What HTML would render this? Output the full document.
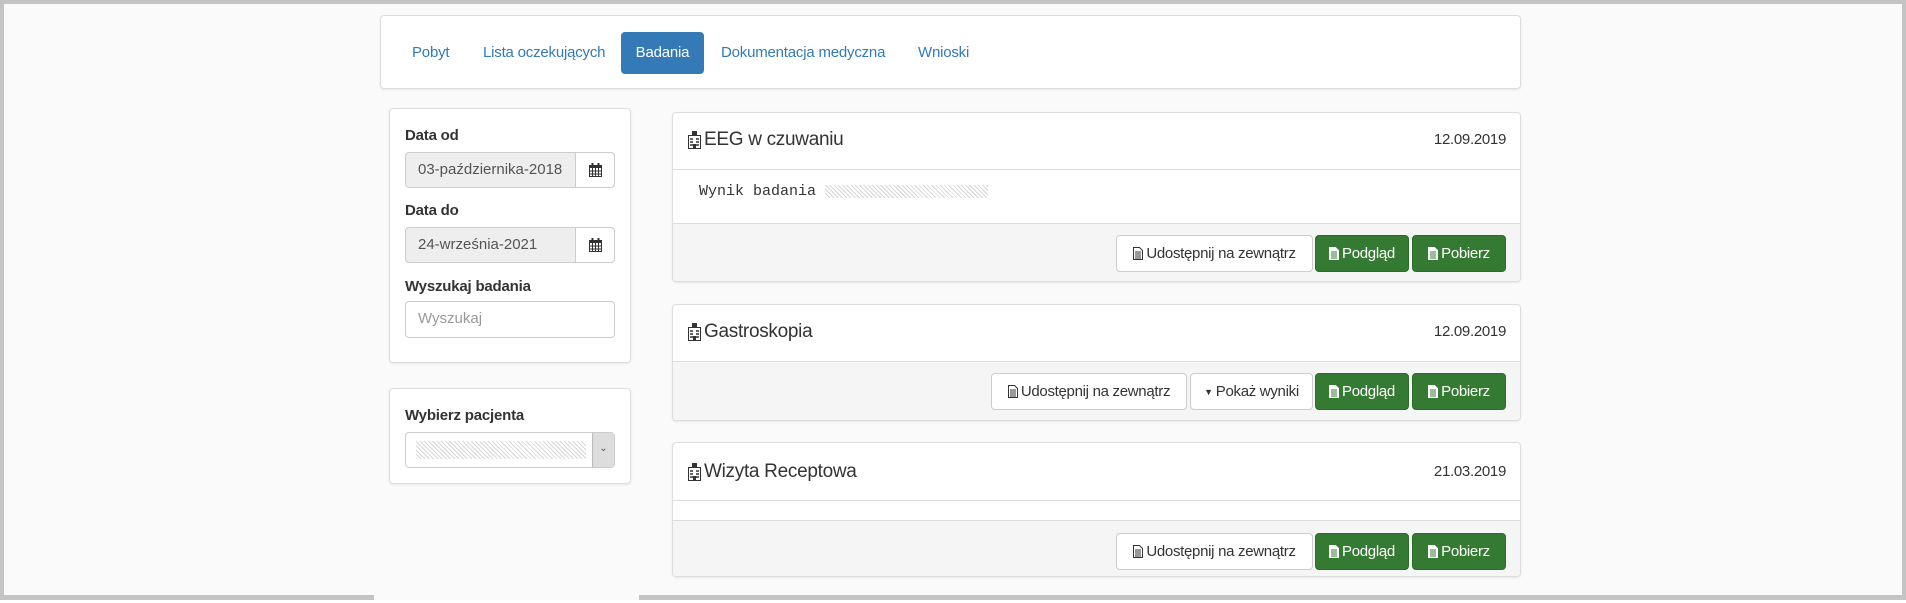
<!DOCTYPE html>
<html><head><meta charset="utf-8"><style>
*{box-sizing:border-box;margin:0;padding:0}
body{width:1906px;height:603px;background:#fafafa;font-family:"Liberation Sans",sans-serif;position:relative;overflow:hidden;color:#333}
.a{position:absolute}
.box{position:absolute;background:#fff;border:1px solid #ddd;border-radius:4px;box-shadow:0 1px 2px rgba(0,0,0,.08)}
.tab{position:absolute;top:32px;height:42px;line-height:42px;font-size:15px;color:#337ab7;letter-spacing:-.2px}
.lbl{position:absolute;left:405px;font-size:15px;font-weight:bold;color:#333;letter-spacing:-.2px}
.inp{position:absolute;left:405px;width:210px;height:36px;border:1px solid #ccc;border-radius:4px;background:#eee;font-size:15px;line-height:34px;padding-left:12px;color:#555}
.inp .ad{position:absolute;right:0;top:0;width:39px;height:34px;background:#fff;border-left:1px solid #ccc;border-radius:0 4px 4px 0;display:flex;align-items:center;justify-content:center}
.card{position:absolute;left:672px;width:849px;background:#fff;border:1px solid #ddd;border-radius:4px;box-shadow:0 1px 2px rgba(0,0,0,.08);overflow:hidden}
.hd{position:absolute;left:0;right:0;top:0;border-bottom:1px solid #ddd}
.tt{position:absolute;left:15px;font-size:19px;color:#333;display:flex;align-items:center;gap:3px;letter-spacing:-.3px}
.dt{position:absolute;right:14px;font-size:15px;color:#333;letter-spacing:-.3px}
.ft{position:absolute;left:0;right:0;bottom:0;background:#f5f5f5;border-top:1px solid #ddd}
.btn{position:absolute;height:37px;border-radius:4px;font-size:15px;display:flex;align-items:center;justify-content:center;gap:3px;letter-spacing:-.3px}
.w{background:#fff;border:1px solid #ccc;color:#333}
.g{background:#357a32;border:1px solid #2d6a2b;color:#fff}
.blur{display:inline-block;background:repeating-linear-gradient(45deg,#ccc 0 1px,#fff 1px 3px),repeating-linear-gradient(-45deg,#bbb 0 1px,transparent 1px 4px);opacity:.8}
</style></head><body>
<div class="a" style="left:0;top:0;width:1906px;height:4px;background:#c4c4c4"></div>
<div class="a" style="left:0;top:0;width:4px;height:600px;background:#c4c4c4"></div>
<div class="a" style="left:1902px;top:0;width:4px;height:600px;background:#c4c4c4"></div>
<div class="a" style="left:0;top:595px;width:374px;height:5px;background:#c4c4c4"></div>
<div class="a" style="left:639px;top:595px;width:1267px;height:5px;background:#c4c4c4"></div>
<div class="a" style="left:0;top:600px;width:1906px;height:3px;background:#fff"></div>

<div class="box" style="left:380px;top:15px;width:1141px;height:74px"></div>
<div class="tab" style="left:412px">Pobyt</div>
<div class="tab" style="left:483px">Lista oczekujących</div>
<div class="tab" style="left:621px;width:83px;background:#337ab7;color:#fff;border-radius:4px;text-align:center">Badania</div>
<div class="tab" style="left:721px">Dokumentacja medyczna</div>
<div class="tab" style="left:918px">Wnioski</div>

<div class="box" style="left:389px;top:108px;width:242px;height:255px"></div>
<div class="lbl" style="top:127px">Data od</div>
<div class="inp" style="top:152px">03-października-2018<div class="ad"><svg width="13" height="14" viewBox="0 0 13 14"><rect x="0.5" y="2.5" width="12" height="11" fill="#fff" stroke="#333"/><rect x="0" y="2" width="13" height="3" fill="#333"/><rect x="2.5" y="0" width="2" height="4" fill="#333"/><rect x="8.5" y="0" width="2" height="4" fill="#333"/><path d="M0 8h13M0 11h13M3.5 5v9M6.5 5v9M9.5 5v9" stroke="#333" stroke-width="1"/></svg></div></div>
<div class="lbl" style="top:202px">Data do</div>
<div class="inp" style="top:227px">24-września-2021<div class="ad"><svg width="13" height="14" viewBox="0 0 13 14"><rect x="0.5" y="2.5" width="12" height="11" fill="#fff" stroke="#333"/><rect x="0" y="2" width="13" height="3" fill="#333"/><rect x="2.5" y="0" width="2" height="4" fill="#333"/><rect x="8.5" y="0" width="2" height="4" fill="#333"/><path d="M0 8h13M0 11h13M3.5 5v9M6.5 5v9M9.5 5v9" stroke="#333" stroke-width="1"/></svg></div></div>
<div class="lbl" style="top:278px">Wyszukaj badania</div>
<div class="inp" style="top:301px;height:37px;background:#fff;color:#999">Wyszukaj</div>

<div class="box" style="left:389px;top:388px;width:242px;height:96px"></div>
<div class="lbl" style="top:407px">Wybierz pacjenta</div>
<div class="inp" style="top:432px;height:36px;background:#fff;padding:0"><span class="blur" style="position:absolute;left:10px;top:8px;width:170px;height:18px"></span><div style="position:absolute;right:0;top:0;width:22px;height:34px;background:#ddd;border-left:1px solid #bbb;font-size:10px;text-align:center;line-height:32px;color:#555">&#8964;</div></div>

<!-- card 1 -->
<div class="card" style="top:112px;height:170px">
 <div class="hd" style="height:57px"></div>
 <div class="tt" style="top:16px"><svg width="13" height="18" viewBox="0 0 13 18"><rect x="0.5" y="4.5" width="12" height="13" fill="#fff" stroke="#333"/><rect x="4" y="0" width="5" height="5" fill="#333"/><path d="M2 8h3M8 8h3M2 11h3M8 11h3M2 14h3M8 14h3" stroke="#333" stroke-width="1.5"/><rect x="5" y="13" width="3" height="5" fill="#333"/></svg>EEG w czuwaniu</div>
 <div class="dt" style="top:18px">12.09.2019</div>
 <div class="a" style="left:26px;top:70px;font-family:'Liberation Mono',monospace;font-size:15px;color:#333">Wynik badania <span class="blur" style="width:163px;height:13px;vertical-align:middle"></span></div>
 <div class="ft" style="height:58px"></div>
 <div class="btn w" style="left:443px;top:122px;width:197px"><svg width="10" height="13" viewBox="0 0 10 13"><path d="M.5.5h6l3 3v9h-9z" fill="#fff" stroke="#333"/><path d="M2 5h6M2 7h6M2 9h6M2 11h6" stroke="#333"/></svg>Udostępnij na zewnątrz</div>
 <div class="btn g" style="left:642px;top:122px;width:94px"><svg width="10" height="13" viewBox="0 0 10 13"><path d="M.5.5h6l3 3v9h-9z" fill="#fff" stroke="#fff"/><path d="M2 5h6M2 7h6M2 9h6M2 11h6" stroke="#357a32"/></svg>Podgląd</div>
 <div class="btn g" style="left:739px;top:122px;width:94px"><svg width="10" height="13" viewBox="0 0 10 13"><path d="M.5.5h6l3 3v9h-9z" fill="#fff" stroke="#fff"/><path d="M2 5h6M2 7h6M2 9h6M2 11h6" stroke="#357a32"/></svg>Pobierz</div>
</div>

<!-- card 2 -->
<div class="card" style="top:304px;height:117px">
 <div class="hd" style="height:58px;border-bottom:2px solid #ddd"></div>
 <div class="tt" style="top:16px"><svg width="13" height="18" viewBox="0 0 13 18"><rect x="0.5" y="4.5" width="12" height="13" fill="#fff" stroke="#333"/><rect x="4" y="0" width="5" height="5" fill="#333"/><path d="M2 8h3M8 8h3M2 11h3M8 11h3M2 14h3M8 14h3" stroke="#333" stroke-width="1.5"/><rect x="5" y="13" width="3" height="5" fill="#333"/></svg>Gastroskopia</div>
 <div class="dt" style="top:18px">12.09.2019</div>
 <div class="ft" style="height:58px;border-top:none"></div>
 <div class="btn w" style="left:318px;top:68px;width:196px"><svg width="10" height="13" viewBox="0 0 10 13"><path d="M.5.5h6l3 3v9h-9z" fill="#fff" stroke="#333"/><path d="M2 5h6M2 7h6M2 9h6M2 11h6" stroke="#333"/></svg>Udostępnij na zewnątrz</div>
 <div class="btn w" style="left:517px;top:68px;width:123px"><span style="font-size:9px">&#9660;</span>Pokaż wyniki</div>
 <div class="btn g" style="left:642px;top:68px;width:94px"><svg width="10" height="13" viewBox="0 0 10 13"><path d="M.5.5h6l3 3v9h-9z" fill="#fff" stroke="#fff"/><path d="M2 5h6M2 7h6M2 9h6M2 11h6" stroke="#357a32"/></svg>Podgląd</div>
 <div class="btn g" style="left:739px;top:68px;width:94px"><svg width="10" height="13" viewBox="0 0 10 13"><path d="M.5.5h6l3 3v9h-9z" fill="#fff" stroke="#fff"/><path d="M2 5h6M2 7h6M2 9h6M2 11h6" stroke="#357a32"/></svg>Pobierz</div>
</div>

<!-- card 3 -->
<div class="card" style="top:442px;height:135px">
 <div class="hd" style="height:58px"></div>
 <div class="tt" style="top:18px"><svg width="13" height="18" viewBox="0 0 13 18"><rect x="0.5" y="4.5" width="12" height="13" fill="#fff" stroke="#333"/><rect x="4" y="0" width="5" height="5" fill="#333"/><path d="M2 8h3M8 8h3M2 11h3M8 11h3M2 14h3M8 14h3" stroke="#333" stroke-width="1.5"/><rect x="5" y="13" width="3" height="5" fill="#333"/></svg>Wizyta Receptowa</div>
 <div class="dt" style="top:20px">21.03.2019</div>
 <div class="ft" style="height:56px"></div>
 <div class="btn w" style="left:443px;top:90px;width:197px"><svg width="10" height="13" viewBox="0 0 10 13"><path d="M.5.5h6l3 3v9h-9z" fill="#fff" stroke="#333"/><path d="M2 5h6M2 7h6M2 9h6M2 11h6" stroke="#333"/></svg>Udostępnij na zewnątrz</div>
 <div class="btn g" style="left:642px;top:90px;width:94px"><svg width="10" height="13" viewBox="0 0 10 13"><path d="M.5.5h6l3 3v9h-9z" fill="#fff" stroke="#fff"/><path d="M2 5h6M2 7h6M2 9h6M2 11h6" stroke="#357a32"/></svg>Podgląd</div>
 <div class="btn g" style="left:739px;top:90px;width:94px"><svg width="10" height="13" viewBox="0 0 10 13"><path d="M.5.5h6l3 3v9h-9z" fill="#fff" stroke="#fff"/><path d="M2 5h6M2 7h6M2 9h6M2 11h6" stroke="#357a32"/></svg>Pobierz</div>
</div>
</body></html>
